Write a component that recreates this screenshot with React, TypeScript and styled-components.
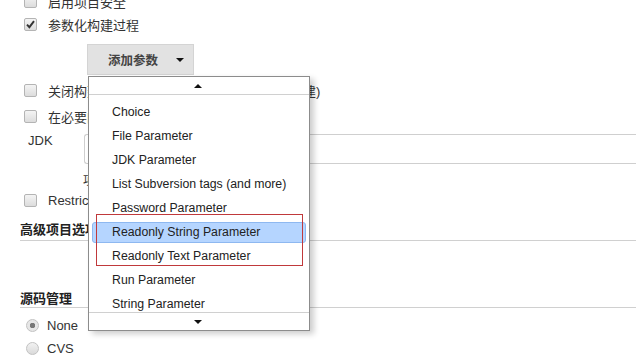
import React from "react";
import styled, { createGlobalStyle } from "styled-components";

const GlobalStyle = createGlobalStyle`
  html, body {
    margin: 0;
    padding: 0;
    background: #fff;
    overflow: hidden;
  }
  body {
    font-family: "Liberation Sans", Arial, "Noto Sans CJK SC", sans-serif;
    font-size: 13px;
    color: #333;
  }
`;

const paramTypes = [
  "Choice",
  "File Parameter",
  "JDK Parameter",
  "List Subversion tags (and more)",
  "Password Parameter",
  "Readonly String Parameter",
  "Readonly Text Parameter",
  "Run Parameter",
  "String Parameter",
];

// 체크박스
function Check({ checked }: { checked?: boolean }) {
  return (
    <CheckBox>
      {checked && (
        <svg width="9" height="9" viewBox="0 0 9 9">
          <path d="M1 4.6 L3.4 7.2 L8 1.2" fill="none" stroke="#333" strokeWidth="1.9" />
        </svg>
      )}
    </CheckBox>
  );
}

export default function App() {
  return (
    <Page>
      <GlobalStyle />
      <CheckRow>
        <Check />
        <RowText>启用项目安全</RowText>
      </CheckRow>
      <CheckRow>
        <Check checked />
        <RowText>参数化构建过程</RowText>
      </CheckRow>

      <ButtonArea>
        <AddButton>
          <span>添加参数</span>
          <Caret $dir="down" />
        </AddButton>

        <Menu>
          <ScrollBar $top>
            <Caret $dir="up" />
          </ScrollBar>
          <MenuList>
            {paramTypes.map((t) => (
              <MenuItem key={t} $active={t === "Readonly String Parameter"}>
                {t}
              </MenuItem>
            ))}
          </MenuList>
          <ScrollBar>
            <Caret $dir="down" />
          </ScrollBar>
        </Menu>
        <Highlight />
      </ButtonArea>

      <CheckRow $h={26}>
        <Check />
        <RowText>关闭构建 (当项目被禁用时将不会执行新的构建)</RowText>
      </CheckRow>
      <CheckRow $h={26}>
        <Check />
        <RowText>在必要的时候并发构建</RowText>
      </CheckRow>

      <JdkRow>
        <JdkLabel>JDK</JdkLabel>
        <SelectBox />
      </JdkRow>
      <HelpText>项目构建时使用的JDK</HelpText>

      <CheckRow $h={24}>
        <Check />
        <RowText>Restrict where this project can be run</RowText>
      </CheckRow>

      <SectionTitle $gap={9} $pad={4}>高级项目选项</SectionTitle>
      <SectionTitle $gap={49} $pad={2}>源码管理</SectionTitle>

      <RadioList>
        <RadioRow>
          <Radio $on />
          <RowText>None</RowText>
        </RadioRow>
        <RadioRow>
          <Radio />
          <RowText>CVS</RowText>
        </RadioRow>
      </RadioList>
    </Page>
  );
}

const Page = styled.div`
  width: 636px;
  height: 372px;
  margin-top: -10px;
  display: flex;
  flex-direction: column;
`;

const CheckRow = styled.div<{ $h?: number }>`
  height: ${(p) => p.$h ?? 23}px;
  display: flex;
  align-items: center;
  padding-left: 24px;
  gap: 11px;
  white-space: nowrap;
`;

const CheckBox = styled.span`
  width: 11px;
  height: 11px;
  border: 1px solid #b4b4b4;
  border-radius: 2px;
  background: linear-gradient(#f4f4f4, #dcdcdc);
  display: flex;
  align-items: center;
  justify-content: center;
  flex-shrink: 0;
`;

const RowText = styled.span`
  font-family: "Liberation Sans", Arial, "Noto Sans CJK SC", sans-serif;
  font-size: 13px;
  color: #333;
`;

const ButtonArea = styled.div`
  position: relative;
  margin-top: 8px;
  padding-left: 87px;
  height: 31px;
  margin-bottom: 2px;
`;

const AddButton = styled.div`
  height: 29px;
  width: 76px;
  box-sizing: content-box;
  border: 1px solid #d4d4d4;
  background: #e2e2e2;
  display: flex;
  align-items: center;
  justify-content: space-between;
  padding: 0 9px 0 20px;
  font-family: "Noto Sans CJK SC", sans-serif;
  font-weight: 700;
  font-size: 12.5px;
  color: #444;
`;

const Caret = styled.span<{ $dir: "up" | "down" }>`
  width: 0;
  height: 0;
  border-left: 4px solid transparent;
  border-right: 4px solid transparent;
  ${(p) => (p.$dir === "down" ? "border-top: 4px solid #111;" : "border-bottom: 4px solid #111;")}
`;

const Menu = styled.div`
  position: absolute;
  left: 88px;
  top: 32px;
  width: 220px;
  height: 253px;
  border: 1px solid #8c8c8c;
  background: #fff;
  box-shadow: 4px 3px 6px rgba(0, 0, 0, 0.2);
  display: flex;
  flex-direction: column;
  z-index: 5;
`;

const ScrollBar = styled.div<{ $top?: boolean }>`
  height: 17px;
  flex-shrink: 0;
  display: flex;
  align-items: center;
  justify-content: center;
  padding-right: 2px;
  ${(p) => (p.$top ? "border-bottom: 1px solid #d0d0d0;" : "border-top: 1px solid #d0d0d0;")}
`;

const MenuList = styled.div`
  flex: 1;
  overflow: hidden;
  padding-top: 5px;
`;

const MenuItem = styled.div<{ $active?: boolean }>`
  height: ${(p) => (p.$active ? 19 : 24)}px;
  line-height: ${(p) => (p.$active ? 19 : 24)}px;
  margin: ${(p) => (p.$active ? "2px 3px 1px 3px" : "0")};
  padding-left: ${(p) => (p.$active ? 19 : 23)}px;
  border: ${(p) => (p.$active ? "1px solid #8eb8f0" : "none")};
  border-radius: 3px;
  background: ${(p) => (p.$active ? "#b5d5ff" : "transparent")};
  font-family: "Liberation Sans", Arial, sans-serif;
  font-size: 12.3px;
  color: #222;
  white-space: nowrap;
`;

const Highlight = styled.div`
  position: absolute;
  left: 96px;
  top: 170px;
  width: 205px;
  height: 50px;
  border: 1px solid #c0393b;
  z-index: 6;
`;

const JdkRow = styled.div`
  margin-top: 5px;
  height: 30px;
  display: flex;
  padding-left: 28px;
`;

const JdkLabel = styled.span`
  width: 56px;
  flex-shrink: 0;
  line-height: 14px;
  font-size: 13px;
`;

const SelectBox = styled.div`
  flex: 1;
  height: 28px;
  border: 1px solid #cfcfcf;
  border-right: none;
  border-radius: 3px 0 0 3px;
`;

const HelpText = styled.div`
  margin-top: 8px;
  height: 16px;
  line-height: 16px;
  padding-left: 83px;
  font-family: "Noto Sans CJK SC", sans-serif;
  font-size: 12px;
  color: #333;
`;

const SectionTitle = styled.div<{ $gap: number; $pad: number }>`
  margin-top: ${(p) => p.$gap}px;
  margin-left: 20px;
  line-height: 15px;
  padding-bottom: ${(p) => p.$pad}px;
  border-bottom: 1px solid #d0d0d0;
  font-family: "Noto Sans CJK SC", sans-serif;
  font-weight: 700;
  font-size: 13px;
  color: #222;
`;

const RadioList = styled.div`
  margin-top: 6px;
  display: flex;
  flex-direction: column;
`;

const RadioRow = styled.div`
  height: 23px;
  display: flex;
  align-items: center;
  padding-left: 26px;
  gap: 8px;
`;

const Radio = styled.span<{ $on?: boolean }>`
  width: 11px;
  height: 11px;
  border: 1px solid #c2c2c2;
  border-radius: 50%;
  background: ${(p) =>
    p.$on
      ? "radial-gradient(circle, #777 0 2.5px, #e6e6e6 3px)"
      : "linear-gradient(#f2f2f2, #dadada)"};
`;
